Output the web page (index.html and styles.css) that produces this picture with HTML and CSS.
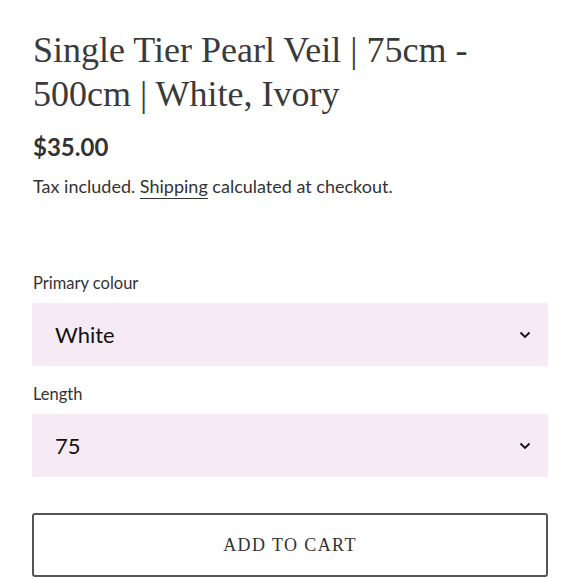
FILE: index.html
```html
<!DOCTYPE html>
<html>
<head>
<meta charset="utf-8">
<link rel="stylesheet" href="styles.css">
</head>
<body>
<div class="product">
  <h1 class="title">Single Tier Pearl Veil | 75cm - 500cm | White, Ivory</h1>
  <div class="price">$35.00</div>
  <p class="tax">Tax included. <a class="link" href="#">Shipping</a> calculated at checkout.</p>
  <div class="field">
    <label class="label">Primary colour</label>
    <div class="select"><span>White</span>
      <svg class="chev" width="12" height="8" viewBox="0 0 12 8"><path d="M1.5 1.5 L6 6 L10.5 1.5" fill="none" stroke="#111" stroke-width="1.8"/></svg>
    </div>
  </div>
  <div class="field">
    <label class="label">Length</label>
    <div class="select"><span>75</span>
      <svg class="chev" width="12" height="8" viewBox="0 0 12 8"><path d="M1.5 1.5 L6 6 L10.5 1.5" fill="none" stroke="#111" stroke-width="1.8"/></svg>
    </div>
  </div>
  <button class="cart">ADD TO CART</button>
</div>
</body>
</html>
```
FILE: styles.css
```css
html, body { margin: 0; padding: 0; background: #fff; }
.product {
  padding: 28px 32px 0 32px;
  display: flex;
  flex-direction: column;
}
.title {
  font-family: "Liberation Serif", "DejaVu Serif", serif;
  font-weight: normal;
  font-size: 36px;
  line-height: 44px;
  color: #3a3a3a;
  margin: 0 0 0 1px;
}
.price {
  font-family: Lato, "Noto Sans", sans-serif;
  font-weight: bold;
  font-size: 24px;
  line-height: 30px;
  color: #333;
  margin-top: 16px;
  margin-left: 1px;
}
.tax {
  font-family: Lato, "Noto Sans", sans-serif;
  font-size: 18px;
  line-height: 26px;
  color: #333;
  margin: 11px 0 0 1px;
}
.link {
  color: #333;
  text-decoration: none;
  border-bottom: 1.5px solid #333;
  padding-bottom: 1px;
}
.field { display: flex; flex-direction: column; }
.label {
  font-family: Lato, "Noto Sans", sans-serif;
  font-size: 16.5px;
  line-height: 20px;
  color: #333;
  margin: 0 0 10px 1px;
}
.tax + .field { margin-top: 74px; }
.field + .field { margin-top: 18px; }
.select {
  height: 63px;
  background: #f6ebf5;
  border-radius: 2px;
  display: flex;
  align-items: center;
  justify-content: space-between;
  padding: 0 17px 0 23px;
  font-family: Lato, "Noto Sans", sans-serif;
  font-size: 22px;
  color: #111;
}
.chev { display: block; }
.cart {
  margin-top: 36px;
  height: 64px;
  background: #fff;
  border: 2px solid #555;
  border-radius: 3px;
  font-family: "Liberation Serif", "DejaVu Serif", serif;
  font-size: 18px;
  letter-spacing: 1.4px;
  color: #333;
}
```
